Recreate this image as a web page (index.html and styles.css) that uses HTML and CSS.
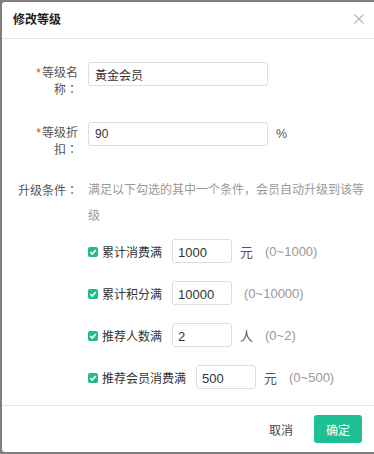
FILE: index.html
```html
<!DOCTYPE html>
<html>
<head>
    <title>修改等级</title>
    <link rel="stylesheet" href="styles.css">
</head>
<body>
    <div class="dialog">
        <div class="dialog-header">
            <span class="dialog-title">修改等级</span>
            <span class="dialog-close">
                <svg width="10" height="10" viewBox="0 0 10 10"><path d="M0.5 0.5 L9.5 9.5 M9.5 0.5 L0.5 9.5" stroke="#a9b3c4" stroke-width="1.1" fill="none"/></svg>
            </span>
        </div>
        <div class="dialog-body">
            <div class="form-row">
                <div class="form-label"><span class="required">*</span>等级名称<span class="colon">：</span></div>
                <div class="form-field">
                    <input class="text-input" type="text" value="黃金会员">
                </div>
            </div>
            <div class="form-row">
                <div class="form-label"><span class="required">*</span>等级折扣<span class="colon">：</span></div>
                <div class="form-field">
                    <input class="text-input" type="text" value="90">
                    <span class="suffix">%</span>
                </div>
            </div>
            <div class="form-row cond-row">
                <div class="form-label cond-label">升级条件<span class="colon">：</span></div>
                <div class="cond-body">
                    <div class="cond-desc">满足以下勾选的其中一个条件，会员自动升级到该等级</div>
                    <div class="cond-list">
                        <div class="cond-item">
                            <span class="check"><svg width="10" height="10" viewBox="0 0 10 10"><path d="M2.3 5.2 L4.2 7 L7.8 3" stroke="#fff" stroke-width="1.6" fill="none"/></svg></span>
                            <span class="cond-name">累计消费满</span>
                            <input class="num-input" type="text" value="1000">
                            <span class="unit">元</span>
                            <span class="range">(0~1000)</span>
                        </div>
                        <div class="cond-item">
                            <span class="check"><svg width="10" height="10" viewBox="0 0 10 10"><path d="M2.3 5.2 L4.2 7 L7.8 3" stroke="#fff" stroke-width="1.6" fill="none"/></svg></span>
                            <span class="cond-name">累计积分满</span>
                            <input class="num-input" type="text" value="10000">
                            <span class="range">(0~10000)</span>
                        </div>
                        <div class="cond-item">
                            <span class="check"><svg width="10" height="10" viewBox="0 0 10 10"><path d="M2.3 5.2 L4.2 7 L7.8 3" stroke="#fff" stroke-width="1.6" fill="none"/></svg></span>
                            <span class="cond-name">推荐人数满</span>
                            <input class="num-input" type="text" value="2">
                            <span class="unit">人</span>
                            <span class="range">(0~2)</span>
                        </div>
                        <div class="cond-item">
                            <span class="check"><svg width="10" height="10" viewBox="0 0 10 10"><path d="M2.3 5.2 L4.2 7 L7.8 3" stroke="#fff" stroke-width="1.6" fill="none"/></svg></span>
                            <span class="cond-name">推荐会员消费满</span>
                            <input class="num-input" type="text" value="500">
                            <span class="unit">元</span>
                            <span class="range">(0~500)</span>
                        </div>
                    </div>
                </div>
            </div>
        </div>
        <div class="dialog-footer">
            <button class="btn btn-cancel">取消</button>
            <button class="btn btn-ok">确定</button>
        </div>
    </div>
</body>
</html>
```

FILE: styles.css
```css
body {
    margin: 0;
    padding: 0;
    width: 374px;
    height: 454px;
    background: #808080;
    overflow: hidden;
    font-family: "Liberation Sans", "Noto Sans CJK SC", sans-serif;
    color: #333;
}
.dialog {
    margin: 2px 0 0 2px;
    width: 374px;
    height: 450px;
    background: #fff;
    border-radius: 3px;
    display: flex;
    flex-direction: column;
}
.dialog-header {
    flex-shrink: 0;
    height: 36px;
    border-bottom: 1px solid #e5e5e5;
    display: flex;
    align-items: center;
    justify-content: space-between;
    padding: 0 12px 0 11px;
    box-sizing: content-box;
}
.dialog-title {
    font-size: 12px;
    font-weight: bold;
    color: #222;
    margin-top: -3px;
}
.dialog-close {
    display: flex;
    margin-top: -3px;
}
.dialog-body {
    flex: 1;
    min-height: 0;
    padding: 23px 0 0 14px;
}
.form-row {
    display: flex;
    align-items: flex-start;
    margin-bottom: 24px;
}
.form-label {
    width: 62px;
    flex-shrink: 0;
    text-align: right;
    font-size: 12px;
    line-height: 15px;
    padding-top: 4px;
    color: #555;
}
.colon {
    font-family: "Noto Sans CJK TC", sans-serif;
}
.required {
    color: #e8400c;
    font-size: 12px;
    margin-right: 1px;
}
.form-field {
    margin-left: 10px;
    display: flex;
    align-items: center;
}
.text-input {
    width: 180px;
    height: 24px;
    box-sizing: border-box;
    border: 1px solid #ddd;
    border-radius: 3px;
    padding: 0 6px;
    font-family: inherit;
    font-size: 12px;
    color: #333;
    outline: none;
}
.suffix {
    margin-left: 8px;
    font-size: 12.5px;
    color: #555;
}
.cond-row {
    margin-top: -5px;
    margin-bottom: 0;
}
.cond-label {
    padding-top: 0;
    line-height: 26px;
}
.cond-body {
    margin-left: 10px;
    width: 280px;
}
.cond-desc {
    font-size: 12px;
    line-height: 26px;
    color: #999;
}
.cond-list {
    margin-top: 10px;
    display: flex;
    flex-direction: column;
    gap: 18px;
}
.cond-item {
    display: flex;
    align-items: center;
    height: 24px;
}
.check {
    width: 10px;
    height: 10px;
    background: #1fbd8e;
    border-radius: 2px;
    display: flex;
    margin-top: 2px;
}
.cond-name {
    margin-left: 4px;
    font-size: 12px;
    color: #333;
}
.num-input {
    margin-left: 10px;
    width: 60px;
    height: 24px;
    box-sizing: border-box;
    border: 1px solid #ddd;
    border-radius: 3px;
    padding: 3px 5px 0 5px;
    font-family: inherit;
    font-size: 13px;
    color: #333;
    outline: none;
}
.unit {
    margin-left: 8px;
    font-size: 13px;
    color: #555;
}
.range {
    margin-left: 12px;
    font-size: 13px;
    color: #999;
}
.dialog-footer {
    flex-shrink: 0;
    border-top: 1px solid #e5e5e5;
    display: flex;
    justify-content: flex-end;
    align-items: center;
    gap: 9px;
    padding: 9px 14px 9px 0;
}
.btn {
    width: 48px;
    height: 28px;
    border: none;
    border-radius: 3px;
    font-family: inherit;
    font-size: 12px;
    padding: 0;
    background: none;
}
.btn-cancel {
    color: #444;
}
.btn-ok {
    background: #1fbf94;
    color: #fff;
}
```
